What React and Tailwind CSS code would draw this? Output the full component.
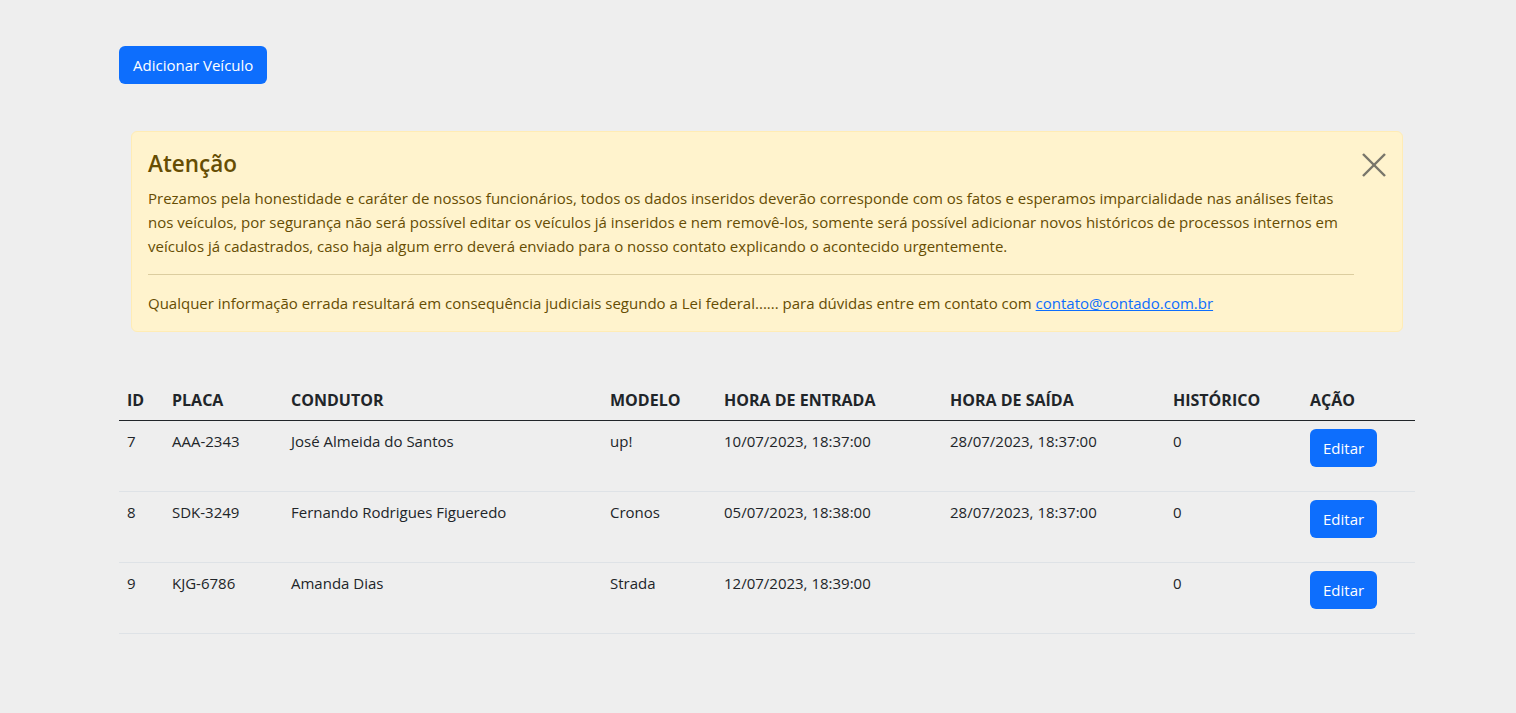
import React from "react";

const rows = [
  { id: 7, placa: "AAA-2343", condutor: "José Almeida do Santos", modelo: "up!", entrada: "10/07/2023, 18:37:00", saida: "28/07/2023, 18:37:00", hist: "0" },
  { id: 8, placa: "SDK-3249", condutor: "Fernando Rodrigues Figueredo", modelo: "Cronos", entrada: "05/07/2023, 18:38:00", saida: "28/07/2023, 18:37:00", hist: "0" },
  { id: 9, placa: "KJG-6786", condutor: "Amanda Dias", modelo: "Strada", entrada: "12/07/2023, 18:39:00", saida: "", hist: "0" },
];

const cols = ["w-[45px]", "w-[119px]", "w-[319px]", "w-[114px]", "w-[226px]", "w-[223px]", "w-[137px]", "w-[113px]"];
const heads = ["ID", "PLACA", "CONDUTOR", "MODELO", "HORA DE ENTRADA", "HORA DE SAÍDA", "HISTÓRICO", "AÇÃO"];

export default function App() {
  return (
    <div className="min-h-[713px] bg-[#eeeeee] text-[#212529] text-[15px] leading-6 [font-family:'Open_Sans',sans-serif]">
      <div className="ml-[119px] w-[1296px] pt-[46px]">
        <button className="h-[38px] px-[14px] rounded-md bg-[#0d6efd] text-white text-[15px] leading-6">
          Adicionar Veículo
        </button>

        <div className="mx-3 mt-[47px] relative rounded-md border border-[#ffecb5] bg-[#fff3cd] text-[#664d03] p-4">
          <h4 className="text-[22.5px] leading-[29px] font-semibold mb-2 mt-[1px]">Atenção</h4>
          <button className="absolute right-[16px] top-[21px] w-6 h-6" aria-label="Close">
            <svg viewBox="0 0 24 24" className="w-6 h-6" fill="none" stroke="#78756a" strokeWidth="2.4" strokeLinecap="butt">
              <line x1="1" y1="1" x2="23" y2="23" />
              <line x1="23" y1="1" x2="1" y2="23" />
            </svg>
          </button>
          <p className="mb-4 whitespace-nowrap">
            Prezamos pela honestidade e caráter de nossos funcionários, todos os dados inseridos deverão corresponde com os fatos e esperamos imparcialidade nas análises feitas
            <br />
            nos veículos, por segurança não será possível editar os veículos já inseridos e nem removê-los, somente será possível adicionar novos históricos de processos internos em
            <br />
            veículos já cadastrados, caso haja algum erro deverá enviado para o nosso contato explicando o acontecido urgentemente.
          </p>
          <hr className="border-0 border-t border-[#dccd9f] mb-4 mr-[32px]" />
          <p>
            Qualquer informação errada resultará em consequência judiciais segundo a Lei federal...... para dúvidas entre em contato com{" "}
            <a href="#" className="text-[#0d6efd] underline">contato@contado.com.br</a>
          </p>
        </div>

        <table className="mt-[48px] w-[1296px] table-fixed border-collapse">
          <colgroup>
            {cols.map((c, i) => (
              <col key={i} className={c} />
            ))}
          </colgroup>
          <thead>
            <tr className="border-b border-[#212529]">
              {heads.map((h) => (
                <th key={h} className="text-left font-bold text-[16px] px-2 py-2 align-bottom">{h}</th>
              ))}
            </tr>
          </thead>
          <tbody>
            {rows.map((r) => (
              <tr key={r.id} className="border-b border-[#dee2e6]">
                <td className="px-2 pt-2 pb-6 align-top">{r.id}</td>
                <td className="px-2 pt-2 align-top">{r.placa}</td>
                <td className="px-2 pt-2 align-top">{r.condutor}</td>
                <td className="px-2 pt-2 align-top">{r.modelo}</td>
                <td className="px-2 pt-2 align-top">{r.entrada}</td>
                <td className="px-2 pt-2 align-top">{r.saida}</td>
                <td className="px-2 pt-2 align-top">{r.hist}</td>
                <td className="px-2 pt-2 pb-2 align-top">
                  <button className="h-[38px] px-[13px] rounded-md bg-[#0d6efd] text-white text-[15px] leading-6 mb-4 block">
                    Editar
                  </button>
                </td>
              </tr>
            ))}
          </tbody>
        </table>
      </div>
    </div>
  );
}
